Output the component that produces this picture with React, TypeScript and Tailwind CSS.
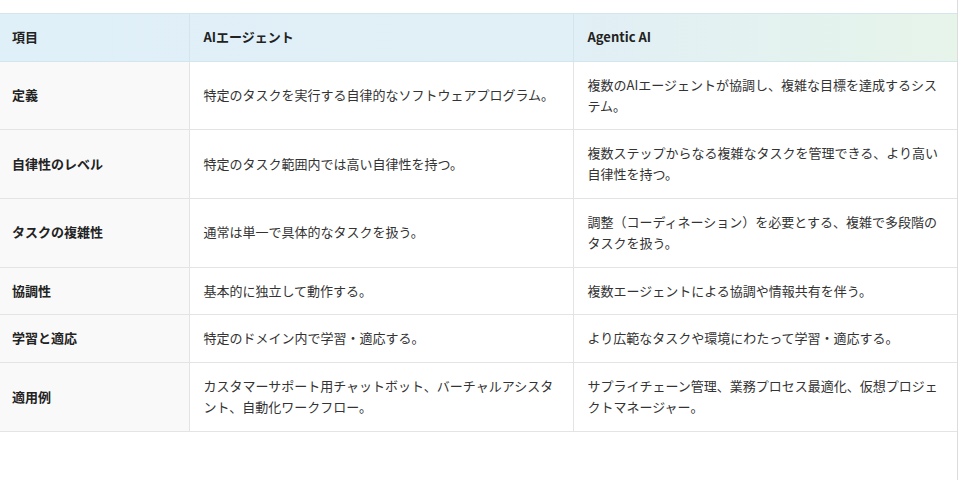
const ROWS: [string, string, string][] = [
  ["定義", "特定のタスクを実行する自律的なソフトウェアプログラム。", "複数のAIエージェントが協調し、複雑な目標を達成するシステム。"],
  ["自律性のレベル", "特定のタスク範囲内では高い自律性を持つ。", "複数ステップからなる複雑なタスクを管理できる、より高い自律性を持つ。"],
  ["タスクの複雑性", "通常は単一で具体的なタスクを扱う。", "調整（コーディネーション）を必要とする、複雑で多段階のタスクを扱う。"],
  ["協調性", "基本的に独立して動作する。", "複数エージェントによる協調や情報共有を伴う。"],
  ["学習と適応", "特定のドメイン内で学習・適応する。", "より広範なタスクや環境にわたって学習・適応する。"],
  ["適用例", "カスタマーサポート用チャットボット、バーチャルアシスタント、自動化ワークフロー。", "サプライチェーン管理、業務プロセス最適化、仮想プロジェクトマネージャー。"],
];

export default function App() {
  return (
    <div
      className="h-[480px] w-[960px] overflow-hidden bg-white"
      style={{ fontFamily: '"Noto Sans CJK JP", "Noto Sans", sans-serif' }}
    >
      <div className="h-full w-[958px] border-r border-[#dcdcdc] pt-[13px]">
        <table className="w-[957px] table-fixed border-collapse text-[13px] leading-[1.6] text-[#333]">
          <colgroup>
            <col className="w-[189px]" />
            <col className="w-[384px]" />
            <col />
          </colgroup>
          <thead>
            <tr className="bg-[linear-gradient(90deg,#e0f0f8_0%,#e1eff6_60%,#e6f4ea_100%)] text-[#222]">
              <th className="border-y border-[#d3e6ec] py-[13px] pl-3 pr-[14px] text-left font-bold">項目</th>
              <th className="border border-[#d3e6ec] py-[13px] px-[14px] text-left font-bold">AIエージェント</th>
              <th className="border-y border-l border-[#d3e6ec] py-[13px] px-[14px] text-left font-bold">Agentic AI</th>
            </tr>
          </thead>
          <tbody>
            {ROWS.map(([label, agent, agentic]) => (
              <tr key={label} className="border-b border-[#e4e4e4]">
                <td className="bg-[#f9f9f9] py-[13px] pl-3 pr-[14px] font-bold text-[#222]">{label}</td>
                <td className="border-x border-[#e4e4e4] py-[13px] px-[14px]">{agent}</td>
                <td className="py-[13px] px-[14px]">{agentic}</td>
              </tr>
            ))}
          </tbody>
        </table>
      </div>
    </div>
  );
}
